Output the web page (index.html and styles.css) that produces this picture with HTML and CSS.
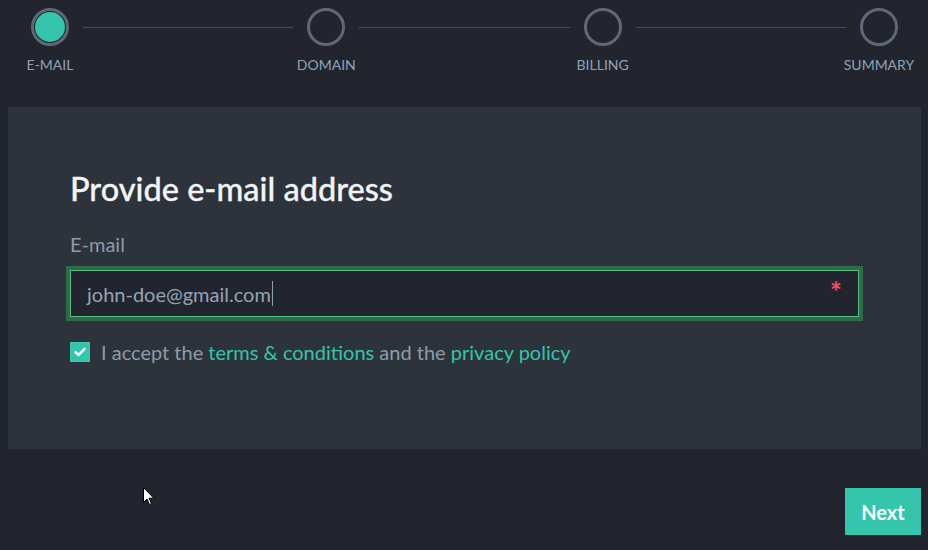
FILE: index.html
```html
<!DOCTYPE html>
<html>
<head>
<meta charset="utf-8">
<link rel="stylesheet" href="styles.css">
</head>
<body>
<div class="page">
  <div class="stepper">
    <div class="dots">
      <span class="dot active"></span>
      <span class="line"></span>
      <span class="dot"></span>
      <span class="line"></span>
      <span class="dot"></span>
      <span class="line"></span>
      <span class="dot"></span>
    </div>
    <div class="labels">
      <span class="label">E-MAIL</span>
      <span class="label">DOMAIN</span>
      <span class="label">BILLING</span>
      <span class="label">SUMMARY</span>
    </div>
  </div>

  <div class="panel">
    <h1 class="title">Provide e-mail address</h1>
    <label class="field-label">E-mail</label>
    <div class="input">
      <span class="value">john-doe@gmail.com</span><span class="caret"></span>
      <span class="req">*</span>
    </div>
    <div class="accept">
      <span class="check">
        <svg width="12" height="10" viewBox="0 0 12 10"><path d="M1.5 5.2 L4.6 8 L10.5 1.8" fill="none" stroke="#fff" stroke-width="2.4" stroke-linecap="round" stroke-linejoin="round"/></svg>
      </span>
      <span class="accept-text">I accept the <a class="link">terms &amp; conditions</a> and the <a class="link">privacy policy</a></span>
    </div>
  </div>

  <div class="footer">
    <button class="next">Next</button>
  </div>

  <svg class="cursor" width="12" height="19" viewBox="0 0 12 19"><path d="M0.5 0.5 L0.5 15.5 L4 12 L6.5 17.5 L8.5 16.6 L6 11.2 L10.8 11.2 Z" fill="#fff" stroke="#000" stroke-width="1"/></svg>
</div>
</body>
</html>
```
FILE: styles.css
```css
html, body {
  margin: 0;
  padding: 0;
  background: #22252d;
  font-family: Lato, "Open Sans", "Liberation Sans", sans-serif;
}
.page {
  position: relative;
  width: 928px;
  height: 550px;
  box-sizing: border-box;
  padding: 8px 7px 0 8px;
}
.dots {
  display: flex;
  align-items: center;
  margin: 0 23px;
  height: 38px;
}
.dot {
  width: 38px;
  height: 38px;
  box-sizing: border-box;
  border: 3px solid #5f6879;
  border-radius: 50%;
  flex: none;
}
.dot.active {
  padding: 1px;
  background: #35c4ac;
  background-clip: content-box;
}
.line {
  flex: 1;
  height: 1px;
  background: #474e59;
  margin: 0 14px;
}
.labels {
  display: flex;
  justify-content: space-between;
  margin-top: 10px;
}
.label {
  width: 84px;
  text-align: center;
  font-size: 14px;
  color: #8ea3ba;
  line-height: 17px;
}
.panel {
  margin-top: 34px;
  height: 342px;
  box-sizing: border-box;
  background: #2c333b;
  padding: 62px 62px 0 62px;
}
.title {
  margin: 0;
  font-size: 32.5px;
  font-weight: 500;
  line-height: 40px;
  color: #f2f4f6;
  -webkit-text-stroke: 0.3px #f2f4f6;
}
.field-label {
  display: block;
  margin-top: 23px;
  font-size: 20px;
  line-height: 24px;
  color: #8c9cab;
}
.input {
  margin-top: 14px;
  height: 47px;
  box-sizing: border-box;
  border: 1px solid #52c17d;
  box-shadow: 0 0 0 4px #2f6a4b;
  background: #22252d;
  display: flex;
  align-items: center;
  padding: 0 16px;
  position: relative;
}
.value {
  font-size: 20px;
  color: #93a4b6;
}
.caret {
  width: 1px;
  height: 25px;
  background: #8ea0b0;
  margin-left: 1px;
}
.req {
  position: absolute;
  right: 16px;
  top: 6px;
  color: #ea5068;
  font-size: 28px;
  line-height: 28px;
  font-weight: 700;
}
.accept {
  display: flex;
  align-items: center;
  margin-top: 23px;
}
.check {
  width: 20px;
  height: 20px;
  background: #35c4ac;
  display: flex;
  align-items: center;
  justify-content: center;
  flex: none;
}
.accept-text {
  margin-left: 11px;
  font-size: 20px;
  color: #8c9cab;
  line-height: 24px;
}
.link {
  color: #35c4ac;
}
.footer {
  display: flex;
  justify-content: flex-end;
  margin-top: 39px;
}
.next {
  width: 76px;
  height: 47px;
  border: none;
  background: #35c4ac;
  color: #ffffff;
  font-family: Lato, "Open Sans", sans-serif;
  font-size: 20px;
  font-weight: 700;
  padding: 0;
}
.cursor {
  position: absolute;
  left: 143px;
  top: 487px;
}
```
